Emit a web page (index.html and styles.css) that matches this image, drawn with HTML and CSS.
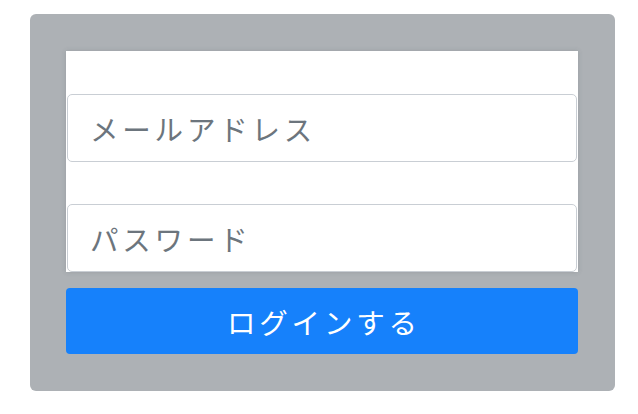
FILE: index.html
```html
<!DOCTYPE html>
<html lang="ja">
<head>
<meta charset="utf-8">
<link rel="stylesheet" href="styles.css">
</head>
<body>
<div class="panel">
  <form class="form">
    <div class="fields">
      <input class="field" type="email" placeholder="メールアドレス">
      <input class="field" type="password" placeholder="パスワード">
    </div>
    <button class="submit" type="button">ログインする</button>
  </form>
</div>
</body>
</html>
```
FILE: styles.css
```css
html, body {
  margin: 0;
  padding: 0;
  background: #ffffff;
}
body {
  padding: 14px 23px 0 30px;
  font-family: "Noto Sans CJK JP", "Noto Sans", sans-serif;
}
.panel {
  width: 585px;
  height: 377px;
  box-sizing: border-box;
  background: #adb1b5;
  border-radius: 6px;
  padding: 37px 37px 0 36px;
}
.form {
  display: flex;
  flex-direction: column;
  gap: 16px;
}
.fields {
  background: #ffffff;
  height: 221px;
  box-sizing: border-box;
  padding: 43px 1px 0 1px;
  display: flex;
  flex-direction: column;
  gap: 42px;
  box-shadow: 0 0 5px rgba(60, 70, 80, 0.18);
}
.field {
  display: block;
  width: 100%;
  height: 68px;
  box-sizing: border-box;
  border: 1.5px solid #c9ced4;
  border-radius: 5px;
  padding: 0 22px;
  font-family: inherit;
  font-size: 28.5px;
  letter-spacing: 3.8px;
  color: #495057;
  background: #fff;
  outline: none;
}
.field::placeholder {
  color: #6c757d;
}
.submit {
  display: block;
  width: 100%;
  height: 66px;
  border: none;
  border-radius: 4px;
  background: #1681fb;
  color: #ffffff;
  font-family: inherit;
  font-size: 28.5px;
  letter-spacing: 3.8px;
  text-indent: 3.8px;
  cursor: pointer;
}
```
